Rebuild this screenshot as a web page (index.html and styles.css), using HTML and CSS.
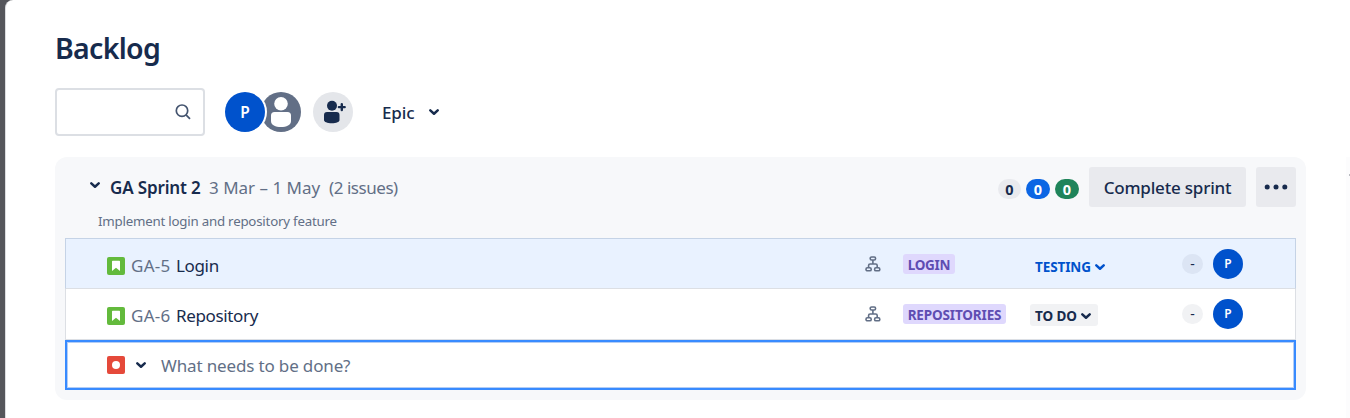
FILE: index.html
```html
<!DOCTYPE html>
<html lang="en">
<head>
<meta charset="utf-8">
<title>Backlog</title>
<link rel="stylesheet" href="styles.css">
</head>
<body>
<svg class="defs" width="0" height="0" aria-hidden="true">
  <symbol id="chevron" viewBox="0 0 12 8"><path d="M2.300 2.400 6 5.700l3.700-3.300" fill="none" stroke="currentColor" stroke-width="2.500" stroke-linecap="round" stroke-linejoin="round"/></symbol>
  <symbol id="story" viewBox="0 0 18 18"><rect width="18" height="18" rx="2" fill="#63ba3c"/><path d="M5 4.500a.7.7 0 0 1 .7-.7h6.600a.7.7 0 0 1 .7.7V14l-4-3.300L5 14z" fill="#fff"/></symbol>
  <symbol id="tree" viewBox="0 0 16 16"><g fill="none" stroke="#626f86" stroke-width="1.600"><rect x="5.200" y="1" width="5.400" height="3" rx="1.400"/><rect x="1" y="11.800" width="5.200" height="3" rx="1.400"/><rect x="9.600" y="11.800" width="5.200" height="3" rx="1.400"/><path d="M7.900 4v4M3.600 11.800V9.500a1.500 1.500 0 0 1 1.500-1.500h5.600a1.500 1.500 0 0 1 1.500 1.500v2.300"/></g></symbol>
</svg>
<main class="page">
  <h1 class="title"><span>Backlog</span></h1>
  <div class="toolbar">
    <div class="search">
      <svg width="18" height="18" viewBox="0 0 18 18"><circle cx="8" cy="7.700" r="5.700" fill="none" stroke="#44546f" stroke-width="1.700"/><path d="m12 11.800 4 4" stroke="#44546f" stroke-width="1.800"/></svg>
    </div>
    <div class="avatars">
      <span class="avatar avatar-user">P</span>
      <svg class="unassigned" width="40" height="40" viewBox="0 0 40 40"><circle cx="20" cy="20" r="20" fill="#626f86"/><circle cx="20" cy="11.700" r="6.800" fill="#fff"/><path d="M10 23.500a3.500 3.500 0 0 1 3.500-3.500h13a3.500 3.500 0 0 1 3.500 3.500V29c0 4-4.500 6-10 6s-10-2-10-6z" fill="#fff"/></svg>
    </div>
    <svg class="add-person" width="40" height="40" viewBox="0 0 40 40"><circle cx="20" cy="20" r="20" fill="#e4e6ea"/><circle cx="19" cy="13.700" r="5" fill="#172b4d"/><path d="M11 23a3 3 0 0 1 3-3h9.500a3 3 0 0 1 3 3v5c0 2-3 3.200-7.700 3.200S11 30 11 28z" fill="#172b4d"/><path d="M28.800 11v8M24.800 15h8" stroke="#e4e6ea" stroke-width="4.500"/><path d="M28.800 12.200v5.800M25.900 15.100h5.800" stroke="#172b4d" stroke-width="2.400" stroke-linecap="round"/></svg>
    <button class="epic"><span>Epic</span><svg width="12" height="8"><use href="#chevron"/></svg></button>
  </div>

  <section class="sprint">
    <header class="sprint-head">
      <svg class="toggle" width="12" height="8"><use href="#chevron"/></svg>
      <strong class="sprint-name">GA Sprint 2</strong>
      <span class="dates">3 Mar – 1 May</span>
      <span class="count">(2 issues)</span>
      <div class="sprint-actions">
        <span class="pill">0</span><span class="pill pill-blue">0</span><span class="pill pill-green">0</span>
        <button class="complete">Complete sprint</button>
        <button class="more"><svg width="24" height="6" viewBox="0 0 24 6" fill="#172b4d"><circle cx="3.200" cy="3" r="2.500"/><circle cx="12" cy="3" r="2.500"/><circle cx="20.800" cy="3" r="2.500"/></svg></button>
      </div>
    </header>
    <p class="goal">Implement login and repository feature</p>
    <div class="issues">
      <div class="issue selected">
        <svg class="type" width="18" height="18"><use href="#story"/></svg>
        <span class="key">GA-5</span><span class="summary">Login</span>
        <svg class="tree" width="16" height="16"><use href="#tree"/></svg>
        <div class="epic-cell"><span class="tag tag-login">LOGIN</span></div>
        <div class="status-cell"><span class="status status-testing"><span>TESTING</span><svg width="12" height="8"><use href="#chevron"/></svg></span></div>
        <span class="estimate">-</span>
        <span class="avatar avatar-small">P</span>
      </div>
      <div class="issue">
        <svg class="type" width="18" height="18"><use href="#story"/></svg>
        <span class="key">GA-6</span><span class="summary">Repository</span>
        <svg class="tree" width="16" height="16"><use href="#tree"/></svg>
        <div class="epic-cell"><span class="tag tag-repo">REPOSITORIES</span></div>
        <div class="status-cell"><span class="status status-todo"><span>TO DO</span><svg width="12" height="8"><use href="#chevron"/></svg></span></div>
        <span class="estimate">-</span>
        <span class="avatar avatar-small">P</span>
      </div>
    </div>
    <div class="create">
      <svg width="18" height="18" viewBox="0 0 18 18"><rect width="18" height="18" rx="2" fill="#e5493a"/><circle cx="9" cy="9" r="4" fill="#fff"/></svg>
      <svg class="create-chevron" width="12" height="8"><use href="#chevron"/></svg>
      <span class="prompt">What needs to be done?</span>
    </div>
  </section>
</main>
<aside class="edge"><span class="edge-mark"></span></aside>
</body>
</html>
```
FILE: styles.css
```css
* { box-sizing: border-box; }
body {
  margin: 0;
  height: 418px;
  padding-left: 5px;
  display: flex;
  overflow: hidden;
  background: #55565b;
  color: #172b4d;
  font-family: "Noto Sans", "Open Sans", sans-serif;
  font-size: 17px;
}
button { border: 0; padding: 0; background: none; color: inherit; font: inherit; }
svg { display: block; flex: none; }
.defs { position: absolute; }
.page {
  width: 1341px;
  height: 418px;
  padding: 28px 0 0 49px;
  background: #fff;
  border-left: 1px solid #dcdde0;
  border-top-left-radius: 8px;
}
.edge { width: 4px; padding: 17px 0 0 3px; border-top: 157px solid #fff; background: #fcfcfd; }
.edge-mark { display: block; width: 1px; height: 2px; background: #b9bbc0; }
.title {
  margin: 0 0 20px;
  height: 40px;
  line-height: 40px;
  font-size: 28.5px;
  font-weight: 600;
  letter-spacing: -0.7px;
}
.toolbar { display: flex; align-items: center; height: 48px; }
.search {
  width: 150px;
  height: 48px;
  padding-right: 11px;
  display: flex;
  align-items: center;
  justify-content: flex-end;
  border: 2px solid #dcdfe4;
  border-radius: 4px;
}
.avatars { display: flex; margin-left: 20px; }
.avatar {
  display: flex;
  align-items: center;
  justify-content: center;
  border-radius: 50%;
  background: #0052cc;
  color: #fff;
  font-weight: 600;
}
.avatar-user { width: 40px; height: 40px; z-index: 1; font-size: 15.5px; box-shadow: 0 0 0 2px #fff; }
.unassigned { margin-left: -4px; }
.add-person { margin-left: 12px; }
.epic { display: flex; align-items: center; margin-left: 29px; font-weight: 500; }
.epic span { width: 46px; text-align: left; letter-spacing: -0.1px; }

.sprint {
  width: 1251px;
  height: 243px;
  margin-top: 21px;
  padding: 10px 10px 0;
  border-radius: 12px;
  background: #f7f8fa;
}
.sprint-head { display: flex; align-items: center; height: 40px; padding-left: 24px; white-space: nowrap; }
.toggle { margin-bottom: 4px; }
.sprint-name { width: 99px; margin-left: 9px; font-weight: 600; letter-spacing: -0.15px; }
.dates { width: 120px; color: #626f86; letter-spacing: 0; }
.count { color: #626f86; letter-spacing: -0.45px; }
.sprint-actions { display: flex; align-items: center; margin-left: auto; }
.pill {
  width: 23px;
  height: 20px;
  margin: 3px 5px 0 0;
  border-radius: 10px;
  background: #e9eaee;
  font-size: 14.5px;
  font-weight: 700;
  line-height: 20px;
  text-align: center;
}
.pill-blue { width: 24px; background: #0c66e4; color: #fff; }
.pill-green { width: 24px; margin-right: 10px; background: #1f845a; color: #fff; }
.complete { width: 157px; height: 40px; border-radius: 3px; background: #e9eaee; font-weight: 500; letter-spacing: -0.2px; }
.more { display: flex; align-items: center; justify-content: center; width: 40px; height: 40px; margin-left: 10px; border-radius: 3px; background: #e9eaee; }
.goal { margin: 4px 0 7px 33px; height: 20px; font-size: 13.3px; line-height: 20px; color: #626f86; letter-spacing: -0.22px; }

.issues { border: 1px solid #dcdfe4; }
.issue { display: flex; align-items: center; height: 50px; padding: 0 52px 1px 41px; background: #fff; }
.issue.selected { margin: -1px -1px 0; height: 51px; padding-bottom: 0; border: 1px solid #c5d3e6; border-bottom-color: #dcdfe4; background: #e9f2ff; }
.type { margin-top: 5px; }
.key { width: 45px; margin: 4px 0 0 6px; color: #626f86; letter-spacing: 0.3px; }
.summary { margin-top: 4px; letter-spacing: -0.35px; }
.tree { margin-left: auto; margin-right: 22px; }
.epic-cell { width: 127px; }
.tag { display: block; height: 20px; padding-top: 1px; border-radius: 3px; background: #dfd8fd; color: #5e4db2; font-size: 13.5px; font-weight: 700; line-height: 20px; text-align: center; }
.tag-login { width: 52px; letter-spacing: -0.3px; }
.tag-repo { width: 103px; letter-spacing: -0.15px; }
.status-cell { width: 152px; }
.status { display: flex; align-items: center; height: 22px; padding: 2px 6px 0 5px; border-radius: 3px; font-size: 13.5px; font-weight: 700; letter-spacing: -0.1px; }
.status svg { margin-left: auto; }
.status-testing { width: 82px; margin-top: 4px; color: #0052cc; }
.status-todo { width: 68px; margin-top: 3px; background: #f1f2f4; }
.estimate { width: 21px; height: 20px; border-radius: 10px; background: rgba(9, 30, 66, 0.06); font-size: 14px; line-height: 20px; text-align: center; }
.avatar-small { width: 30px; height: 30px; margin-left: 10px; font-size: 12px; }
.create { display: flex; align-items: center; height: 50px; padding-left: 40px; border: 2px solid #388bff; background: #fff; box-shadow: inset 0 0 0 1px #b3cdf5; }
.create-chevron { margin-left: 10px; }
.prompt { margin-left: 14px; color: #626f86; letter-spacing: -0.15px; }
```
